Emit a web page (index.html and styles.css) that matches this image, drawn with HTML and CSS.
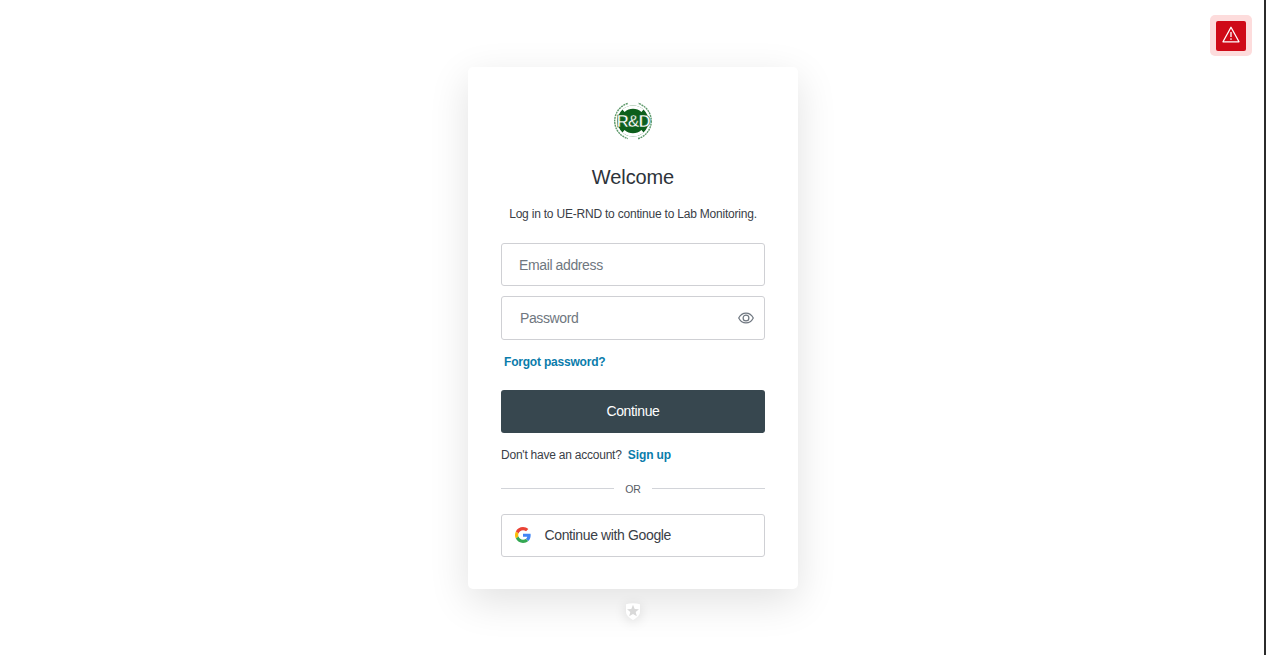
FILE: index.html
```html
<!DOCTYPE html>
<html lang="en">
<head>
<meta charset="utf-8">
<title>Log in | UE-RND</title>
<link rel="stylesheet" href="styles.css">
</head>
<body>
<main class="page">
  <section class="card">
    <svg class="logo" viewBox="0 0 42 38" width="42" height="38" aria-label="R&amp;D logo">
      <circle cx="21" cy="19" r="18.300" fill="#fff" stroke="#5f9a6c" stroke-width="1.400" stroke-dasharray="2 .7"/>
      <rect x="16" y="0" width="10" height="2.500" fill="#fff"/>
      <rect x="16" y="35.500" width="10" height="2.500" fill="#fff"/>
      <circle cx="21" cy="19" r="15.500" fill="#0d5f1c"/>
      <path class="logo-band" d="M11.500 8.800A14 14 0 0 1 30.500 8.800"/>
      <path class="logo-band" d="M11.500 29.200A14 14 0 0 0 30.500 29.200"/>
      <text class="logo-text" x="21" y="25.300" text-anchor="middle">R&amp;D</text>
    </svg>
    <h1 class="title">Welcome</h1>
    <p class="subtitle">Log in to UE-RND to continue to Lab Monitoring.</p>
    <div class="field field-email"><span class="placeholder">Email address</span></div>
    <div class="field field-password">
      <span class="placeholder placeholder-password">Password</span>
      <svg class="eye" viewBox="0 0 16 12" width="16" height="12" aria-hidden="true">
        <path d="M.7 6C2.300 2.900 5 1.100 8 1.100S13.700 2.900 15.300 6C13.700 9.100 11 10.900 8 10.900S2.300 9.100.7 6Z" fill="none" stroke="#6f7780" stroke-width="1.200"/>
        <circle cx="8" cy="6" r="2.900" fill="none" stroke="#6f7780" stroke-width="1.200"/>
      </svg>
    </div>
    <a class="link forgot" href="#">Forgot password?</a>
    <button class="primary" type="button">Continue</button>
    <p class="signup">Don't have an account? <a class="link signup-link" href="#">Sign up</a></p>
    <div class="divider"><span class="rule"></span><span class="or">OR</span><span class="rule"></span></div>
    <button class="social" type="button">
      <svg class="google" viewBox="0 0 48 48" width="16" height="16" aria-hidden="true">
        <path fill="#EA4335" d="M24 9.500c3.540 0 6.710 1.220 9.210 3.600l6.850-6.850C35.900 2.380 30.470 0 24 0 14.620 0 6.510 5.380 2.560 13.220l7.980 6.190C12.430 13.720 17.740 9.500 24 9.500z"/>
        <path fill="#4285F4" d="M46.980 24.550c0-1.570-.15-3.090-.38-4.550H24v9.020h12.940c-.58 2.960-2.260 5.480-4.780 7.180l7.730 6c4.510-4.180 7.090-10.360 7.090-17.650z"/>
        <path fill="#FBBC05" d="M10.530 28.590c-.48-1.450-.76-2.990-.76-4.590s.27-3.140.76-4.590l-7.980-6.190C.92 16.460 0 20.120 0 24c0 3.880.92 7.540 2.560 10.780l7.970-6.190z"/>
        <path fill="#34A853" d="M24 48c6.480 0 11.930-2.130 15.890-5.810l-7.730-6c-2.150 1.450-4.920 2.300-8.160 2.300-6.260 0-11.570-4.220-13.470-9.910l-7.980 6.190C6.510 42.620 14.620 48 24 48z"/>
      </svg>
      <span>Continue with Google</span>
    </button>
  </section>
  <div class="shield-badge">
    <svg viewBox="0 0 16 18" width="16" height="18" aria-hidden="true">
      <path d="M1 2.200Q8 .2 15 2.200V10Q15 14 8 18 1 14 1 10Z" fill="#fff"/>
      <path d="M8 2.800 9.700 6.900 14 7.200 10.700 10 11.800 14.300 8 12 4.200 14.300 5.300 10 2 7.200 6.300 6.900Z" fill="#d9d9d9"/>
    </svg>
  </div>
</main>
<aside class="alert">
  <div class="alert-box">
    <svg viewBox="0 0 18 17" width="18" height="17" aria-hidden="true">
      <path d="M9 1.200 17 15.800H1Z" fill="none" stroke="#fff" stroke-width="1.300" stroke-linejoin="round"/>
      <path d="M9 6V11" stroke="#fff" stroke-width="1.300"/>
      <circle cx="9" cy="13" r=".85" fill="#fff"/>
    </svg>
  </div>
</aside>
</body>
</html>
```

FILE: styles.css
```css
* { box-sizing: border-box; }

html, body {
  margin: 0;
  height: 100%;
  background: #fff;
  overflow: hidden;
}

body {
  font-family: "Liberation Sans", Arial, sans-serif;
  color: #2d333a;
  border-right: 2px solid #2b2b2b;
}

.page {
  display: flex;
  flex-direction: column;
  align-items: center;
  padding-top: 67px;
  width: 1266px;
}

.card {
  width: 330px;
  height: 522px;
  padding: 35px 33px 0;
  display: flex;
  flex-direction: column;
  align-items: stretch;
  background: #fff;
  border-radius: 5px;
  box-shadow: 0 12px 40px rgba(0, 0, 0, 0.12);
}

.logo {
  align-self: center;
  display: block;
}

.logo-band {
  fill: none;
  stroke: #fff;
  stroke-width: 3.200;
}

.logo-text {
  font-family: "Liberation Sans", sans-serif;
  font-weight: 700;
  font-size: 17px;
  letter-spacing: -1.200px;
  fill: #fff;
  stroke: #0d5f1c;
  stroke-width: 0.6px;
}

.title {
  margin: 22px 0 0;
  font-size: 20px;
  line-height: 30px;
  font-weight: 400;
  letter-spacing: -0.1px;
  text-align: center;
  color: #2d333a;
}

.subtitle {
  margin: 13px 0 0;
  font-size: 12px;
  line-height: 18px;
  letter-spacing: -0.21px;
  text-align: center;
  color: #3a4047;
  white-space: nowrap;
}

.field {
  display: flex;
  align-items: center;
  justify-content: space-between;
  border: 1px solid #cfd0d4;
  border-radius: 3px;
  font-size: 14px;
  letter-spacing: -0.38px;
  color: #6f7780;
}

.field-email {
  height: 43px;
  margin-top: 20px;
  padding-left: 17px;
}

.field-password {
  height: 44px;
  margin-top: 10px;
  padding: 0 10px 0 18px;
}

.eye { display: block; }

.link {
  color: #0a7cab;
  font-weight: 700;
  text-decoration: none;
}

.forgot {
  margin: 14px 0 0 3px;
  font-size: 12px;
  line-height: 16px;
  letter-spacing: -0.2px;
}

.primary {
  height: 43px;
  margin-top: 20px;
  padding: 0 0 2px;
  border: 0;
  border-radius: 3px;
  background: #37474f;
  color: #fff;
  font: 400 14px "Liberation Sans", Arial, sans-serif;
  letter-spacing: -0.38px;
}

.signup {
  margin: 14px 0 0;
  font-size: 12px;
  line-height: 16px;
  letter-spacing: -0.23px;
  color: #3a4047;
}

.signup-link {
  margin-left: 3px;
  letter-spacing: -0.1px;
}

.divider {
  display: flex;
  align-items: center;
  gap: 11px;
  margin-top: 18px;
  height: 14px;
}

.rule {
  flex: 1;
  height: 1px;
  background: #d2d4d9;
}

.or {
  width: 16px;
  padding-top: 1px;
  font-size: 10.500px;
  letter-spacing: -0.2px;
  text-align: center;
  color: #565c65;
}

.social {
  display: flex;
  align-items: center;
  gap: 13.500px;
  height: 43px;
  margin-top: 19px;
  padding: 0 0 1px 13px;
  background: #fff;
  border: 1px solid #cfd0d4;
  border-radius: 3px;
  color: #3a4047;
  font: 400 14px "Liberation Sans", Arial, sans-serif;
  letter-spacing: -0.37px;
}

.google { display: block; }

.shield-badge {
  margin-top: 13px;
  width: 16px;
  height: 18px;
  filter: drop-shadow(0 2px 6px rgba(0, 0, 0, 0.12));
}

.shield-badge svg { display: block; }

.alert {
  position: fixed;
  top: 15px;
  right: 14px;
  width: 42px;
  height: 41px;
  display: flex;
  align-items: center;
  justify-content: center;
  background: #fddcdc;
  border-radius: 5px;
}

.alert-box {
  width: 30px;
  height: 30px;
  display: flex;
  align-items: center;
  justify-content: center;
  padding-bottom: 3px;
  background: #cf0a17;
  border-radius: 2px;
}

.alert-box svg { display: block; }
```
